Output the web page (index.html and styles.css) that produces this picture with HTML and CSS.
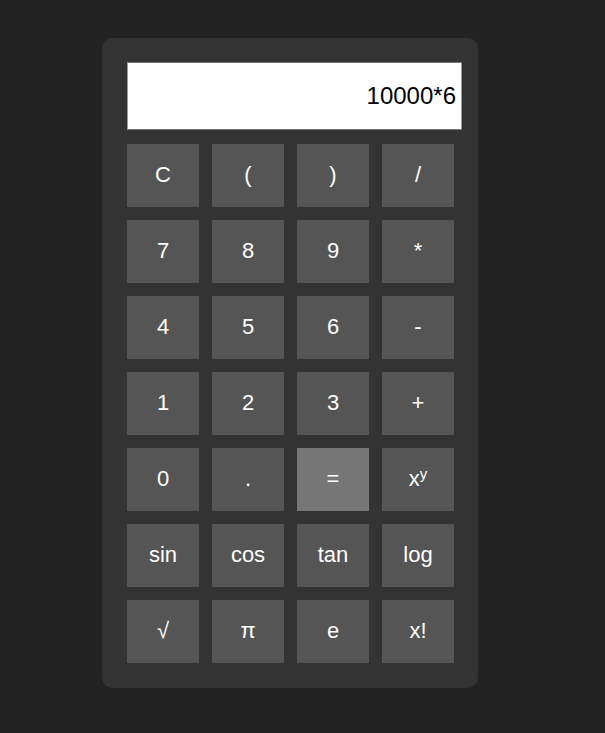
FILE: index.html
```html
<!DOCTYPE html>
<html>
<head>
<meta charset="utf-8">
<link rel="stylesheet" href="styles.css">
</head>
<body>
<div class="calc">
  <div class="display">10000*6</div>
  <div class="keys">
    <div class="key">C</div>
    <div class="key">(</div>
    <div class="key">)</div>
    <div class="key">/</div>
    <div class="key">7</div>
    <div class="key">8</div>
    <div class="key">9</div>
    <div class="key">*</div>
    <div class="key">4</div>
    <div class="key">5</div>
    <div class="key">6</div>
    <div class="key">-</div>
    <div class="key">1</div>
    <div class="key">2</div>
    <div class="key">3</div>
    <div class="key">+</div>
    <div class="key">0</div>
    <div class="key">.</div>
    <div class="key equals">=</div>
    <div class="key">x<sup>y</sup></div>
    <div class="key">sin</div>
    <div class="key">cos</div>
    <div class="key">tan</div>
    <div class="key">log</div>
    <div class="key">√</div>
    <div class="key">π</div>
    <div class="key">e</div>
    <div class="key">x!</div>
  </div>
</div>
</body>
</html>
```
FILE: styles.css
```css
html, body {
  margin: 0;
  padding: 0;
}
body {
  background: #222222;
  font-family: "Liberation Sans", Arial, sans-serif;
  width: 605px;
  height: 733px;
}
.calc {
  margin: 38px 0 0 102px;
  width: 326px;
  padding: 24px 25px 25px 25px;
  background: #333333;
  border-radius: 10px;
}
.display {
  box-sizing: border-box;
  width: 335px;
  height: 68px;
  padding: 0 5px 0 3px;
  background: #ffffff;
  border: 1px solid #767676;
  border-left-color: #999999;
  border-right-color: #999999;
  font-size: 24px;
  color: #000000;
  text-align: right;
  line-height: 66px;
}
.keys {
  margin-top: 14px;
  display: grid;
  grid-template-columns: repeat(4, 72px);
  grid-auto-rows: 63px;
  gap: 13px;
}
.key {
  background: #555555;
  color: #ffffff;
  font-size: 22px;
  line-height: 1;
  padding-bottom: 2px;
  box-sizing: border-box;
  display: flex;
  align-items: center;
  justify-content: center;
}
.key sup {
  font-size: 15px;
  line-height: 0;
  position: relative;
  top: -5px;
  vertical-align: 0;
}
.equals {
  background: #777777;
}
```
